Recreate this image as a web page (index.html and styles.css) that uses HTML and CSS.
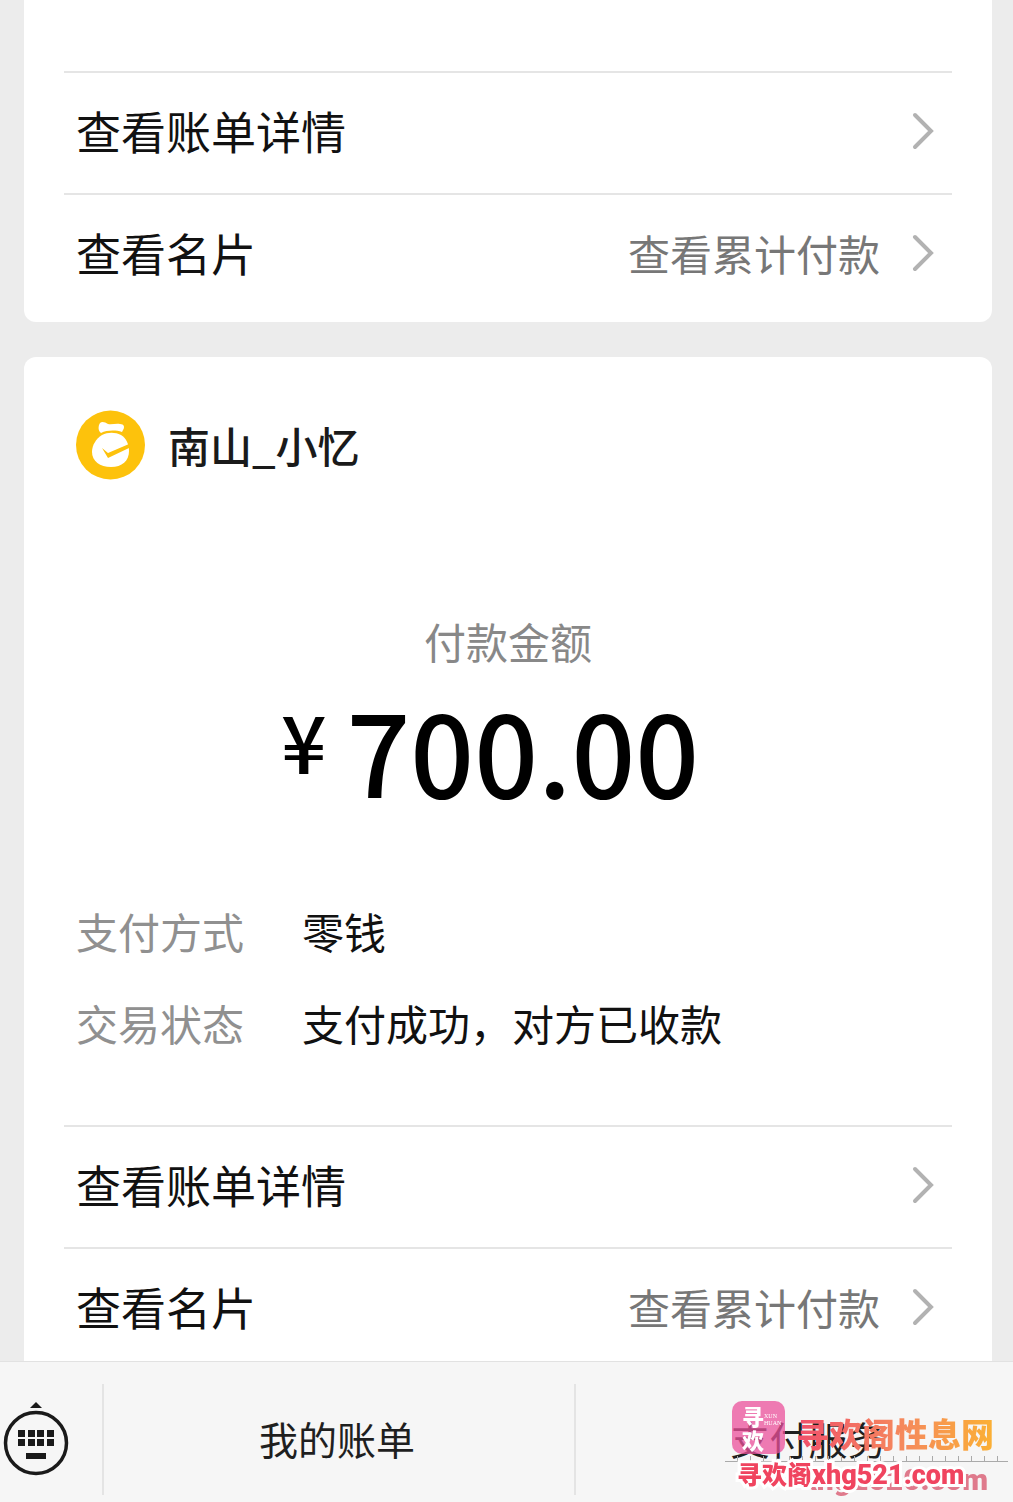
FILE: index.html
```html
<!DOCTYPE html>
<html lang="zh-CN">
<head>
    <meta charset="UTF-8">
    <title>支付服务</title>
    <meta name="viewport" content="width=device-width, initial-scale=1">
    <link rel="stylesheet" href="styles.css">
</head>
<body>
    <main class="messages">
        <section class="card card-prev">
            <a class="row" href="#">
                <span class="row-title">查看账单详情</span>
                <svg class="chevron" viewBox="0 0 22 38"><path d="M3 3L19 19L3 35"/></svg>
            </a>
            <a class="row" href="#">
                <span class="row-title">查看名片</span>
                <span class="row-value">查看累计付款</span>
                <svg class="chevron" viewBox="0 0 22 38"><path d="M3 3L19 19L3 35"/></svg>
            </a>
        </section>

        <section class="card">
            <header class="payee">
                <svg class="payee-icon" viewBox="0 0 70 70">
                    <circle cx="34.500" cy="35" r="34.500" fill="#fdc20c"/>
                    <path d="M24 13c2-2 5-1 8 1 4 1 8-1 12 0 4 0 5 3 3 6l-1 2c-6-2-15-2-21 1-3-2-3-7-1-10z" fill="#fff"/>
                    <path d="M26 25c6-3 13-3 19 0 5 3 8 9 8 16 0 10-7 16-18 16s-19-6-19-15c0-7 4-13 10-17z" fill="#fff"/>
                    <path d="M26 38l6 5 21-9v4L32 48z" fill="#fdc20c"/>
                </svg>
                <h2 class="payee-name">南山_小忆</h2>
            </header>

            <div class="amount">
                <p class="amount-label">付款金额</p>
                <p class="amount-value"><span class="currency">¥</span>700.00</p>
            </div>

            <dl class="details">
                <dt>支付方式</dt>
                <dd>零钱</dd>
                <dt>交易状态</dt>
                <dd>支付成功，对方已收款</dd>
            </dl>

            <a class="row" href="#">
                <span class="row-title">查看账单详情</span>
                <svg class="chevron" viewBox="0 0 22 38"><path d="M3 3L19 19L3 35"/></svg>
            </a>
            <a class="row" href="#">
                <span class="row-title">查看名片</span>
                <span class="row-value">查看累计付款</span>
                <svg class="chevron" viewBox="0 0 22 38"><path d="M3 3L19 19L3 35"/></svg>
            </a>
        </section>
    </main>

    <nav class="menu-bar">
        <button class="keyboard" type="button" aria-label="键盘">
            <svg viewBox="0 0 66 76">
                <path d="M33 1l6 6H27z" fill="#1a1a1a"/>
                <circle cx="33" cy="42" r="30.500" fill="none" stroke="#1a1a1a" stroke-width="3.500"/>
                <path d="M15 29h7v7h-7zM25 29h7v7h-7zM34 29h7v7h-7zM44 29h7v7h-7zM15 38h7v7h-7zM25 38h7v7h-7zM34 38h7v7h-7zM44 38h7v7h-7zM23 52h20v6H23z" fill="#1a1a1a"/>
            </svg>
        </button>
        <a class="menu-item" href="#">我的账单</a>
        <a class="menu-item menu-item-last" href="#">支付服务</a>
    </nav>

    <!-- 水印 -->
    <div class="watermark">
        <div class="mark-badge">
            <span class="mark-badge-cn">寻<br>欢</span>
            <span class="mark-badge-en">XUN<br>HUAN</span>
        </div>
        <span class="mark-name">寻欢阁性息网</span>
        <div class="mark-ruler"></div>
        <span class="mark-url-back">xhg2020.com</span>
        <span class="mark-url">寻欢阁<b>xhg521.com</b></span>
    </div>
</body>
</html>
```
FILE: styles.css
```css
* {
    box-sizing: border-box;
}
body {
    height: 100vh;
    margin: 0;
    display: flex;
    flex-direction: column;
    overflow: hidden;
    background: #ececec;
    font-family: 'Noto Sans CJK SC', sans-serif;
    color: #111;
}
a {
    color: inherit;
    text-decoration: none;
}
.messages {
    flex: 1;
    min-height: 0;
    overflow: hidden;
    display: flex;
    flex-direction: column;
    gap: 35px;
    padding: 0 21px 0 24px;
}
.card {
    flex: none;
    background: #fff;
    border-radius: 12px;
    padding: 52px 40px 7px;
}
.card-prev {
    border-radius: 0 0 12px 12px;
    padding-top: 71px;
}
.row {
    height: 122px;
    display: flex;
    align-items: center;
    gap: 32px;
    padding: 0 18px 4px 12px;
    border-top: 2px solid #e5e5e5;
}
.row-title {
    flex: 1;
    font-size: 45px;
    line-height: 60px;
}
.row-value {
    font-size: 42px;
    line-height: 60px;
    color: #777;
}
.chevron {
    width: 22px;
    height: 38px;
    fill: none;
    stroke: #b2b2b2;
    stroke-width: 4;
    stroke-linecap: round;
}
.payee {
    display: flex;
    align-items: center;
    gap: 22px;
    padding-left: 12px;
}
.payee-icon {
    width: 70px;
    height: 70px;
}
.payee-name {
    margin: 0;
    font-size: 42px;
    line-height: 72px;
    font-weight: 500;
    color: #1a1a1a;
}
.amount {
    margin-top: 130px;
    text-align: center;
}
.amount-label {
    margin: 0;
    font-size: 42px;
    line-height: 60px;
    color: #888;
}
.amount-value {
    display: flex;
    justify-content: center;
    gap: 20px;
    margin: 8px 0 0;
    padding-right: 36px;
    font-size: 112px;
    line-height: 140px;
    font-weight: 500;
    color: #000;
}
.currency {
    font-size: 80px;
    line-height: 120px;
}
.details {
    display: grid;
    grid-template-columns: 226px 1fr;
    row-gap: 32px;
    margin: 82px 0 72px;
    padding-left: 12px;
    font-size: 42px;
    line-height: 60px;
}
.details dt {
    color: #909090;
}
.details dd {
    margin: 0;
}
.menu-bar {
    flex: none;
    height: 141px;
    display: grid;
    grid-template-columns: 102px 472px 1fr;
    padding: 22px 0 7px;
    border-top: 1px solid #e2e2e2;
    background: #f6f6f6;
}
.keyboard {
    display: flex;
    align-items: center;
    border: none;
    background: none;
    padding: 0 0 2px 3px;
    cursor: pointer;
}
.keyboard svg {
    width: 66px;
    height: 76px;
}
.menu-item {
    display: flex;
    align-items: center;
    justify-content: center;
    padding: 0 4px 4px 0;
    border-left: 2px solid #e4e4e4;
    font-size: 39px;
    color: #1f1f1f;
}
.menu-item-last {
    padding-left: 32px;
}
/* 水印 */
.watermark {
    position: fixed;
    right: 5px;
    bottom: 0;
    width: 283px;
    height: 102px;
    pointer-events: none;
    white-space: nowrap;
}
.watermark > * {
    position: absolute;
}
.mark-badge {
    left: 7px;
    top: 1px;
    width: 53px;
    height: 53px;
    border-radius: 10px;
    background: rgba(235, 80, 155, 0.75);
    color: #fff;
}
.mark-badge span {
    position: absolute;
}
.mark-badge-cn {
    left: 10px;
    top: 2px;
    font-size: 22px;
    line-height: 24px;
    font-weight: 900;
}
.mark-badge-en {
    left: 32px;
    top: 12px;
    font: 6px/7px 'Liberation Serif', serif;
}
.mark-name {
    left: 71px;
    top: 9px;
    font-size: 33px;
    line-height: 48px;
    font-weight: 900;
    background: linear-gradient(90deg, #f04f6b, #f58a5c 55%, #fbb034);
    -webkit-background-clip: text;
    background-clip: text;
    color: transparent;
}
.mark-ruler {
    left: 0;
    top: 56px;
    width: 283px;
    height: 6px;
    border-bottom: 1px solid #aaa;
    background: repeating-linear-gradient(90deg, transparent 0 12px, #aaa 12px 13px);
}
.mark-url-back {
    right: 20px;
    bottom: 6px;
    font: 900 30px/32px Roboto, sans-serif;
    color: #df7a8c;
}
.mark-url {
    left: 12px;
    top: 56px;
    font-size: 25px;
    line-height: 34px;
    font-weight: 900;
    color: #f0445f;
    -webkit-text-stroke: 6px #fff;
    paint-order: stroke fill;
}
.mark-url b {
    font-family: Roboto, sans-serif;
    font-size: 27px;
    font-weight: 900;
}
```
